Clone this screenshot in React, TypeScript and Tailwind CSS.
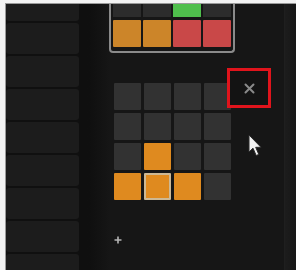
import React from "react";

const topRow = ["#2c2c2c", "#2c2c2c", "#4fbf4c", "#2c2c2c"];
const midRow = ["#cc8529", "#cc8529", "#c94848", "#c94848"];

const O = "#df8a1f";
const D = "#323232";
const grid: string[][] = [
  [D, D, D, D],
  [D, D, D, D],
  [D, O, D, D],
  [O, O, O, D],
];

export default function App() {
  return (
    <div className="relative w-[296px] h-[270px] overflow-hidden bg-[#f3f3f3] pt-[3px] pl-[5px]">
      <div className="flex h-full border-t border-l border-[#9a9a9a] bg-[#151515]">
        {/* left list panel */}
        <div className="w-[73px] shrink-0 flex flex-col gap-[2px] bg-[#101010] overflow-hidden">
          <div className="h-[17px] shrink-0 rounded-b-[3px] bg-[#1c1c1c]" />
          {Array.from({ length: 8 }).map((_, i) => (
            <div key={i} className="h-[31px] shrink-0 rounded-[3px] bg-[#1c1c1c]" />
          ))}
        </div>

        {/* main area */}
        <div className="flex-1 flex flex-col pl-[30px] bg-linear-to-r from-[#0f0f0f] from-5% to-[#161616] to-15%">
          {/* top pattern frame (cut at top) */}
          <div className="w-[126px] border-x-2 border-b-2 border-[#8a8a8a] rounded-b-[4px] px-[2px] pb-[4px] flex flex-col gap-[3px] bg-[#161616]">
            <div className="flex gap-[2px]">
              {topRow.map((c, i) => (
                <div key={i} className="w-[28px] h-[13px]" style={{ backgroundColor: c }} />
              ))}
            </div>
            <div className="flex gap-[2px]">
              {midRow.map((c, i) => (
                <div key={i} className="w-[28px] h-[27px] rounded-[1px]" style={{ backgroundColor: c }} />
              ))}
            </div>
          </div>

          {/* pad grid */}
          <div className="mt-[30px] ml-[5px] grid grid-cols-[repeat(4,27px)] gap-[3px]">
            {grid.map((row, r) =>
              row.map((c, ci) => {
                const selected = r === 3 && ci === 1;
                return (
                  <div
                    key={`${r}-${ci}`}
                    className={
                      selected
                        ? "h-[27px] rounded-[1px] border-2 border-[#cdb894]"
                        : "h-[27px] rounded-[1px]"
                    }
                    style={{ backgroundColor: c }}
                  />
                );
              })
            )}
          </div>

          {/* add button */}
          <div className="mt-[36px] ml-[5px] w-[8px] h-[8px]">
            <svg width="8" height="8" viewBox="0 0 8 8">
              <path d="M4 0.5V7.5M0.5 4H7.5" stroke="#b5b5b5" strokeWidth="1.6" />
            </svg>
          </div>
        </div>

        {/* right edge strip */}
        <div className="w-[12px] shrink-0 border-l border-[#1f1f1f] bg-linear-to-r from-[#1c1c1c] to-[#171717]" />
      </div>

      {/* red highlight box over the close button */}
      <div className="absolute left-[227px] top-[68px] w-[44px] h-[40px] border-[3px] border-[#e0141c] bg-[#131313] flex items-center justify-center">
        <svg width="11" height="11" viewBox="0 0 11 11">
          <path d="M1.5 1.5L9.5 9.5M9.5 1.5L1.5 9.5" stroke="#8a8a8a" strokeWidth="2" strokeLinecap="round" />
        </svg>
      </div>

      {/* mouse cursor */}
      <svg
        className="absolute left-[248px] top-[134px]"
        width="16"
        height="24"
        viewBox="0 0 16 24"
      >
        <path
          d="M1 1 L1 18 L5 14.2 L8.2 21.5 L10.8 20.4 L7.7 13.3 L13 13.3 Z"
          fill="#f2f2f2"
          stroke="#2a2a2a"
          strokeWidth="1"
          strokeLinejoin="round"
        />
      </svg>
    </div>
  );
}
